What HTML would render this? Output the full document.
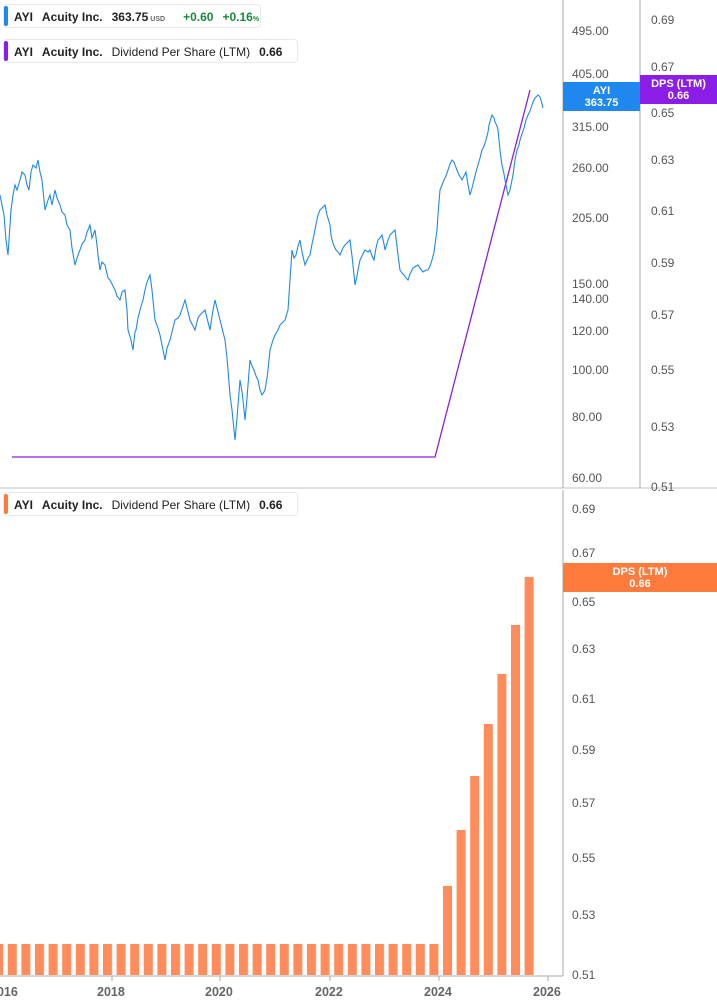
<!DOCTYPE html>
<html><head><meta charset="utf-8"><style>
body{margin:0;width:717px;height:1005px;background:#fff;position:relative;overflow:hidden;font-family:"Liberation Sans",Arial,sans-serif;}
.leg{position:absolute;left:3px;height:24px;border:1px solid #e8e8e8;border-radius:4px;background:#fff;font-size:12px;font-weight:bold;color:#222;line-height:24px;padding-left:10px;white-space:nowrap;box-sizing:border-box}
.leg:before{content:"";position:absolute;left:0;top:1px;bottom:1px;width:4px;border-radius:2px;background:var(--c)}
.leg span{margin-right:9px}
.n{font-weight:normal}
.g{color:#1a8a3a}
.ax{position:absolute;font-size:12px;color:#555}
.lbl{position:absolute;color:#fff;font-size:11px;font-weight:bold;text-align:center;line-height:12px}
</style></head><body>
<svg width="717" height="1005" style="position:absolute;left:0;top:0">
<defs><pattern id="p" x="7.8" y="0" width="13.6" height="1005" patternUnits="userSpaceOnUse"><rect x="0" y="944" width="9" height="31" fill="#ff8c5a"/></pattern></defs>
<line x1="0" y1="488" x2="717" y2="488" stroke="#e0e0e0" stroke-width="2"/>
<line x1="563" y1="0" x2="563" y2="488" stroke="#aaa"/>
<line x1="640" y1="0" x2="640" y2="488" stroke="#aaa"/>
<line x1="563" y1="490" x2="563" y2="976" stroke="#aaa"/>
<line x1="0" y1="976" x2="563" y2="976" stroke="#aaa"/>
<g stroke="#aaa"><line x1="439" y1="976" x2="439" y2="981"/><line x1="548" y1="976" x2="548" y2="981"/><line x1="220" y1="976" x2="220" y2="981"/><line x1="112" y1="976" x2="112" y2="981"/><line x1="330" y1="976" x2="330" y2="981"/></g>
<rect x="0" y="900" width="440" height="80" fill="url(#p)"/>
<g fill="#ff8c5a">
<rect x="443" y="886" width="9" height="89"/><rect x="456.6" y="830" width="9" height="145"/><rect x="470.2" y="776" width="9" height="199"/><rect x="483.8" y="724" width="9" height="251"/><rect x="497.4" y="674" width="9" height="301"/><rect x="511" y="625" width="9" height="350"/><rect x="524.6" y="577" width="9" height="398"/>
</g>
<polyline fill="none" stroke="#8a1ee6" stroke-width="1.3" points="12,457 435,457 530,90"/>
<polyline fill="none" stroke="#1e88ee" stroke-width="1.1" points="0,195 2,205 4,215 6,240 8,255 10,225 11,210 13,195 15,185 17,190 20,180 22,172 25,175 27,185 29,190 31,172 33,165 36,168 38,160 40,172 42,180 44,200 45,210 48,200 50,195 52,205 55,190 57,198 60,205 62,212 65,215 67,225 70,230 72,248 75,265 77,258 80,250 82,244 85,240 87,232 90,225 92,238 95,230 97,245 98,255 100,270 102,262 105,265 108,278 110,280 113,286 115,290 117,296 120,300 122,292 125,290 127,310 128,330 131,340 133,350 135,332 136,330 138,318 140,310 143,300 145,290 147,282 150,275 152,290 153,300 155,320 158,328 160,335 163,350 165,360 167,348 170,340 173,328 175,320 178,318 180,315 183,306 185,300 188,312 190,320 193,326 195,330 198,318 200,315 203,312 205,310 208,322 210,330 213,310 215,300 218,312 220,320 223,332 225,340 227,358 228,370 230,395 232,410 233,420 235,440 237,418 238,405 240,380 242,392 243,400 245,420 247,398 248,385 250,360 252,366 254,370 256,376 258,380 260,390 262,395 264,392 265,390 267,378 268,370 270,350 273,340 275,335 278,330 280,325 283,322 285,320 288,310 289,295 290,280 292,250 294,258 296,255 298,246 300,240 302,252 305,265 308,258 310,255 312,244 314,235 316,224 318,215 320,210 322,208 325,205 327,215 330,225 331,235 332,240 334,246 336,250 338,252 340,255 343,248 345,245 348,242 350,240 352,256 353,265 355,285 357,276 358,270 360,260 363,254 365,250 368,252 370,250 372,256 374,260 376,248 378,240 380,238 382,235 384,244 385,250 388,240 390,235 393,232 395,230 397,246 398,255 400,270 402,273 404,275 406,278 408,280 410,274 413,268 416,266 418,265 420,268 423,272 426,270 428,270 430,266 432,260 434,252 435,245 437,230 438,215 439,202 440,190 442,185 444,180 446,176 448,170 450,164 452,160 454,162 455,165 457,170 459,175 461,178 462,180 464,176 466,172 468,185 470,195 472,188 474,180 476,172 478,165 480,158 482,150 484,146 486,140 488,132 489,125 491,118 492,115 494,118 495,122 497,126 498,130 499,140 500,150 501,158 502,165 504,174 505,180 507,190 508,195 510,190 511,185 512,180 513,175 515,160 517,150 519,145 520,140 522,134 524,128 526,120 528,115 530,111 531,108 533,102 535,98 537,96 538,95 540,97 541,100 543,108"/>
</svg>
<div class="leg" style="--c:#1e88ee;top:4px;width:258px"><span>AYI</span><span>Acuity Inc.</span><span>363.75<span style="font-size:7px;color:#666;margin-left:2px">USD</span></span><span class="g">+0.60</span><span class="g">+0.16<span style="font-size:7px">%</span></span></div>
<div class="leg" style="--c:#8a1ee6;top:39px;width:295px"><span>AYI</span><span>Acuity Inc.</span><span class="n">Dividend Per Share (LTM)</span><span>0.66</span></div>
<div class="leg" style="--c:#ff7a3d;top:492px;width:295px"><span>AYI</span><span>Acuity Inc.</span><span class="n">Dividend Per Share (LTM)</span><span>0.66</span></div>
<div class="ax" style="left:572px;top:24px">495.00</div>
<div class="ax" style="left:572px;top:67px">405.00</div>
<div class="ax" style="left:572px;top:120px">315.00</div>
<div class="ax" style="left:572px;top:161px">260.00</div>
<div class="ax" style="left:572px;top:211px">205.00</div>
<div class="ax" style="left:572px;top:277px">150.00</div>
<div class="ax" style="left:572px;top:292px">140.00</div>
<div class="ax" style="left:572px;top:324px">120.00</div>
<div class="ax" style="left:572px;top:363px">100.00</div>
<div class="ax" style="left:572px;top:410px">80.00</div>
<div class="ax" style="left:572px;top:471px">60.00</div>
<div class="ax" style="left:651px;top:13px">0.69</div>
<div class="ax" style="left:651px;top:60px">0.67</div>
<div class="ax" style="left:651px;top:106px">0.65</div>
<div class="ax" style="left:651px;top:153px">0.63</div>
<div class="ax" style="left:651px;top:204px">0.61</div>
<div class="ax" style="left:651px;top:256px">0.59</div>
<div class="ax" style="left:651px;top:308px">0.57</div>
<div class="ax" style="left:651px;top:363px">0.55</div>
<div class="ax" style="left:651px;top:420px">0.53</div>
<div class="ax" style="left:651px;top:480px">0.51</div>
<div class="ax" style="left:572px;top:502px">0.69</div>
<div class="ax" style="left:572px;top:546px">0.67</div>
<div class="ax" style="left:572px;top:595px">0.65</div>
<div class="ax" style="left:572px;top:642px">0.63</div>
<div class="ax" style="left:572px;top:692px">0.61</div>
<div class="ax" style="left:572px;top:743px">0.59</div>
<div class="ax" style="left:572px;top:796px">0.57</div>
<div class="ax" style="left:572px;top:851px">0.55</div>
<div class="ax" style="left:572px;top:908px">0.53</div>
<div class="ax" style="left:572px;top:968px">0.51</div>
<div class="ax" style="left:-10px;top:985px;font-weight:bold;font-size:12.5px;color:#666">2016</div>
<div class="ax" style="left:97px;top:985px;font-weight:bold;font-size:12.5px;color:#666">2018</div>
<div class="ax" style="left:205px;top:985px;font-weight:bold;font-size:12.5px;color:#666">2020</div>
<div class="ax" style="left:315px;top:985px;font-weight:bold;font-size:12.5px;color:#666">2022</div>
<div class="ax" style="left:424px;top:985px;font-weight:bold;font-size:12.5px;color:#666">2024</div>
<div class="ax" style="left:533px;top:985px;font-weight:bold;font-size:12.5px;color:#666">2026</div>
<div class="lbl" style="left:563px;top:82px;width:77px;height:29px;background:#1e88ee;padding-top:3px;box-sizing:border-box">AYI<br>363.75</div>
<div class="lbl" style="left:640px;top:75px;width:77px;height:29px;background:#8a1ee6;padding-top:3px;box-sizing:border-box">DPS (LTM)<br>0.66</div>
<div class="lbl" style="left:563px;top:563px;width:154px;height:29px;background:#ff7a3d;padding-top:3px;box-sizing:border-box">DPS (LTM)<br>0.66</div>
</body></html>
